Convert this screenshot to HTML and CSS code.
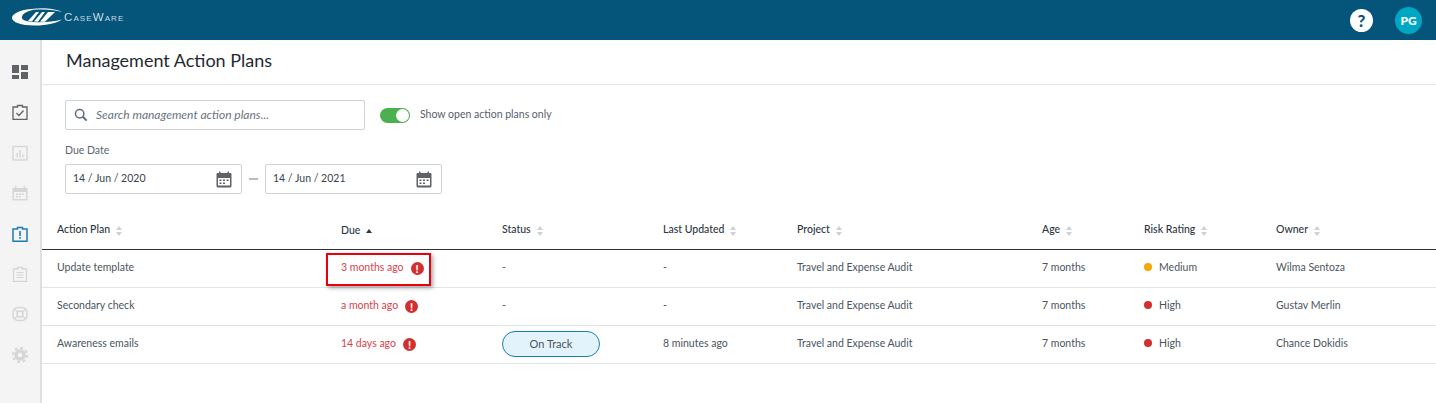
FILE: index.html
```html
<!DOCTYPE html>
<html>
	<head>
		<meta charset="UTF-8">
		<title>Management Action Plans</title>
		<link rel="stylesheet" href="styles.css">
	</head>
	<body>
		<div class="topbar">
			<div class="logo">
				<svg width="52" height="20" viewBox="0 0 52 20">
					<path d="M20 2C8 3 1 7 1 11C1 15 10 18.500 24 18.500C36 18.500 46 16 51 12.500C42 15 32 15.500 22 15C14 14.500 10 12.500 11 9.500C12 6 18 3.500 24 2.600Z" fill="#fff"/>
					<path d="M20 2C30 0.500 44 1 51 5C44 2.800 32 2 24 2.800Z" fill="#e6eef2"/>
					<path d="M17 14L25 5H28L21 14.500ZM23 14.500L31 5H34L27 14.800ZM29 14.800L37 5H44L34 14.800Z" fill="#fff"/>
				</svg>
				<span class="logo-text">CaseWare</span>
			</div>
			<div class="top-right">
				<span class="help">?</span>
				<span class="avatar">PG</span>
			</div>
		</div>
		<div class="main">
			<div class="sidebar">
				<svg class="nav" viewBox="0 0 16 16"><path d="M0 1H7V9H0ZM9 1H16V6H9ZM0 11H7V15H0ZM9 8H16V15H9Z" fill="#5f6266"/></svg>
				<svg class="nav" viewBox="0 0 16 16"><path d="M1 3H5.500V1.500H10.500V3H15V15.500H1Z" fill="none" stroke="#5f6266" stroke-width="1.300"/><path d="M4.500 9L7 11.500L11.500 6.500" fill="none" stroke="#5f6266" stroke-width="1.300"/></svg>
				<svg class="nav" viewBox="0 0 16 16"><path d="M1 1.500H15V15H1Z" fill="none" stroke="#d5d6d7" stroke-width="1.300"/><path d="M4.500 8H6V12.500H4.500ZM7.300 5H8.800V12.500H7.300ZM10.200 9.500H11.700V12.500H10.200Z" fill="#d5d6d7"/></svg>
				<svg class="nav" viewBox="0 0 16 16"><path d="M0.500 3H3V1H4.500V3H11.500V1H13V3H15.500V15.500H0.500Z" fill="#d5d6d7"/><path d="M2 7H14V14H2Z" fill="#f4f4f4"/><path d="M4 8.500H6V10H4ZM7 8.500H9V10H7ZM10 8.500H12V10H10ZM4 11H6V12.500H4ZM7 11H9V12.500H7Z" fill="#d5d6d7"/></svg>
				<svg class="nav" viewBox="0 0 16 16"><path d="M1 3H5.500V1.500H10.500V3H15V15.300H1Z" fill="none" stroke="#1b7db2" stroke-width="1.500"/><path d="M7.200 5H8.800V10H7.200ZM7.200 11H8.800V12.700H7.200Z" fill="#1b7db2"/></svg>
				<svg class="nav" viewBox="0 0 16 16"><path d="M1.500 3H5.500V1.500H10.500V3H14.500V15.300H1.500Z" fill="none" stroke="#d5d6d7" stroke-width="1.300"/><path d="M4.500 6.500H11.500M4.500 9H11.500M4.500 11.500H11.500" stroke="#d5d6d7" stroke-width="1.200"/></svg>
				<svg class="nav" viewBox="0 0 16 16"><rect x="1" y="1.500" width="14" height="13" rx="5" fill="none" stroke="#d5d6d7" stroke-width="1.500"/><circle cx="8" cy="8" r="3" fill="none" stroke="#d5d6d7" stroke-width="1.500"/><path d="M2.500 3.500L5.800 6M13.500 3.500L10.200 6M2.500 12.500L5.800 10M13.500 12.500L10.200 10" stroke="#d5d6d7" stroke-width="1.300"/></svg>
				<svg class="nav" viewBox="0 0 16 16"><circle cx="8" cy="8" r="7" fill="none" stroke="#d5d6d7" stroke-width="2.400" stroke-dasharray="2.700 2.800"/><circle cx="8" cy="8" r="4" fill="none" stroke="#d5d6d7" stroke-width="3.400"/></svg>
			</div>
			<div class="content">
				<h1 class="title">Management Action Plans</h1>
				<div class="filters">
					<div class="filter-row">
						<div class="search">
							<svg width="14" height="14" viewBox="0 0 16 16"><circle cx="6.500" cy="6.500" r="4.800" fill="none" stroke="#5d6d7e" stroke-width="1.700"/><path d="M10 10L14.500 14.500" stroke="#5d6d7e" stroke-width="2.200"/></svg>
							<span class="search-text">Search management action plans...</span>
						</div>
						<span class="toggle"><span class="knob"></span></span>
						<span class="toggle-label">Show open action plans only</span>
					</div>
					<div class="date-label">Due Date</div>
					<div class="date-row">
						<div class="date">
							<span>14 / Jun / 2020</span>
							<svg width="16" height="17" viewBox="0 0 16 17"><path d="M0.500 3Q0.500 2 1.500 2H3V0.500H4.500V2H11.500V0.500H13V2H14.500Q15.500 2 15.500 3V15Q15.500 16.500 14 16.500H2Q0.500 16.500 0.500 15Z" fill="#5f6266"/><path d="M2 7H14V14.500H2Z" fill="#fff"/><path d="M3.500 8.500H5.500V10H3.500ZM7 8.500H9V10H7ZM10.500 8.500H12.500V10H10.500ZM3.500 11.500H5.500V13H3.500ZM7 11.500H9V13H7Z" fill="#5f6266"/></svg>
						</div>
						<span class="dash"></span>
						<div class="date">
							<span>14 / Jun / 2021</span>
							<svg width="16" height="17" viewBox="0 0 16 17"><path d="M0.500 3Q0.500 2 1.500 2H3V0.500H4.500V2H11.500V0.500H13V2H14.500Q15.500 2 15.500 3V15Q15.500 16.500 14 16.500H2Q0.500 16.500 0.500 15Z" fill="#5f6266"/><path d="M2 7H14V14.500H2Z" fill="#fff"/><path d="M3.500 8.500H5.500V10H3.500ZM7 8.500H9V10H7ZM10.500 8.500H12.500V10H10.500ZM3.500 11.500H5.500V13H3.500ZM7 11.500H9V13H7Z" fill="#5f6266"/></svg>
						</div>
					</div>
				</div>
				<table class="plans">
					<colgroup>
						<col class="c1"><col class="c2"><col class="c3"><col class="c4"><col class="c5"><col class="c6"><col class="c7"><col>
					</colgroup>
					<thead>
						<tr>
							<th>Action Plan<span class="sort"></span></th>
							<th>Due<span class="sort-up"></span></th>
							<th>Status<span class="sort"></span></th>
							<th>Last Updated<span class="sort"></span></th>
							<th>Project<span class="sort"></span></th>
							<th>Age<span class="sort"></span></th>
							<th>Risk Rating<span class="sort"></span></th>
							<th>Owner<span class="sort"></span></th>
						</tr>
					</thead>
					<tbody>
						<tr>
							<td>Update template</td>
							<td class="late">3 months ago<span class="alert">!</span><span class="callout"></span></td>
							<td>-</td>
							<td>-</td>
							<td>Travel and Expense Audit</td>
							<td>7 months</td>
							<td><span class="dot medium"></span>Medium</td>
							<td>Wilma Sentoza</td>
						</tr>
						<tr>
							<td>Secondary check</td>
							<td class="late">a month ago<span class="alert">!</span></td>
							<td>-</td>
							<td>-</td>
							<td>Travel and Expense Audit</td>
							<td>7 months</td>
							<td><span class="dot high"></span>High</td>
							<td>Gustav Merlin</td>
						</tr>
						<tr>
							<td>Awareness emails</td>
							<td class="late">14 days ago<span class="alert">!</span></td>
							<td><span class="pill">On Track</span></td>
							<td>8 minutes ago</td>
							<td>Travel and Expense Audit</td>
							<td>7 months</td>
							<td><span class="dot high"></span>High</td>
							<td>Chance Dokidis</td>
						</tr>
					</tbody>
				</table>
			</div>
		</div>
	</body>
</html>
```

FILE: styles.css
```css
*{
	margin: 0;
	padding: 0;
	box-sizing: border-box;
}
html,body{
	height: 100%;
	overflow: hidden;
}
body{
	font-family: Lato, "Liberation Sans", sans-serif;
	font-size: 10.500px;
	color: #4a5560;
	background: #fff;
}
.topbar{
	display: flex;
	align-items: center;
	justify-content: space-between;
	height: 40px;
	padding: 0 14px 0 11px;
	background: #05557b;
}
.logo{
	display: flex;
	align-items: center;
	gap: 1px;
	margin-top: -6px;
}
.logo-text{
	font-family: "Liberation Sans", sans-serif;
	font-variant: small-caps;
	font-size: 11.500px;
	letter-spacing: 1.100px;
	color: #c9dae3;
}
.top-right{
	display: flex;
	align-items: center;
	gap: 22px;
}
.help{
	width: 23px;
	height: 23px;
	border-radius: 50%;
	background: #fff;
	color: #05557b;
	font-size: 17px;
	font-weight: 900;
	line-height: 23px;
	text-align: center;
}
.avatar{
	width: 27px;
	height: 27px;
	border-radius: 50%;
	background: #00a7c4;
	color: #fff;
	font-size: 12px;
	font-weight: 900;
	line-height: 27px;
	text-align: center;
}
.main{
	display: flex;
	height: 363px;
}
.sidebar{
	display: flex;
	flex-direction: column;
	align-items: center;
	gap: 24.400px;
	flex: none;
	width: 42px;
	padding-top: 24px;
	padding-right: 1px;
	background: #f4f4f4;
	border-right: 2px solid #e0e0e0;
}
.nav{
	display: block;
	flex: none;
	width: 16px;
	height: 16px;
}
.content{
	flex: 1;
	min-width: 0;
}
.title{
	height: 45px;
	padding: 9px 0 0 24px;
	font-size: 18px;
	font-weight: 400;
	line-height: 23px;
	color: #1f2a33;
	border-bottom: 1px solid #e3e5e7;
}
.filters{
	padding: 15px 0 0 23px;
}
.filter-row{
	display: flex;
	align-items: center;
}
.search{
	display: flex;
	align-items: center;
	gap: 8px;
	width: 300px;
	height: 30px;
	padding-left: 8px;
	border: 1px solid #ced3da;
	border-radius: 2px;
	font-size: 12px;
	font-style: italic;
	color: #6a7480;
}
.search-text{
	margin-bottom: 1px;
}
.toggle{
	display: flex;
	justify-content: flex-end;
	align-items: center;
	width: 30px;
	height: 15px;
	margin: 0 10px 0 15px;
	padding-right: 1px;
	border-radius: 8px;
	background: #4caf50;
}
.knob{
	width: 13px;
	height: 13px;
	border-radius: 50%;
	background: #fff;
}
.toggle-label{
	margin-bottom: 2px;
	color: #55606c;
}
.date-label{
	margin-top: 13px;
	line-height: 14px;
	color: #5c6773;
}
.date-row{
	display: flex;
	align-items: center;
	margin-top: 7px;
}
.date{
	display: flex;
	align-items: center;
	justify-content: space-between;
	width: 177px;
	height: 30px;
	padding: 0 9px 0 7px;
	border: 1px solid #ced3da;
	border-radius: 2px;
	color: #38424c;
}
.date span{
	margin-bottom: 2px;
}
.dash{
	width: 9px;
	height: 1px;
	margin: 0 7px;
	border-top: 2px solid #b9bdc2;
}
.plans{
	width: 100%;
	margin-top: 16px;
	border-collapse: separate;
	border-spacing: 0;
	table-layout: fixed;
}
.c1{ width: 284px; }
.c2{ width: 161px; }
.c3{ width: 161px; }
.c4{ width: 134px; }
.c5{ width: 245px; }
.c6{ width: 102px; }
.c7{ width: 132px; }
.plans th{
	height: 40px;
	padding: 0 0 0 15px;
	font-weight: 500;
	text-align: left;
	color: #2b3640;
	border-bottom: 1px solid #333;
}
.plans td{
	position: relative;
	height: 38px;
	padding: 0 0 4px 15px;
	border-bottom: 1px solid #e3e4e5;
}
.sort,.sort-up{
	display: inline-block;
	vertical-align: middle;
	margin-left: 6px;
}
.sort{
	position: relative;
	width: 7px;
	height: 10px;
}
.sort:before,.sort:after{
	content: "";
	position: absolute;
	left: 0;
	border-left: 3.500px solid transparent;
	border-right: 3.500px solid transparent;
}
.sort:before{
	top: 0;
	border-bottom: 4px solid #cfd2d5;
}
.sort:after{
	bottom: 0;
	border-top: 4px solid #cfd2d5;
}
.sort-up{
	width: 0;
	height: 0;
	border-left: 3.500px solid transparent;
	border-right: 3.500px solid transparent;
	border-bottom: 4px solid #333;
}
.plans td.late{
	padding-bottom: 2px;
	color: #d9424a;
}
.alert{
	display: inline-block;
	width: 13px;
	height: 13px;
	margin-left: 7px;
	border-radius: 50%;
	background: #d32f2f;
	color: #fff;
	font-size: 11px;
	font-weight: 900;
	line-height: 13px;
	text-align: center;
	vertical-align: -2px;
}
.callout{
	position: absolute;
	top: 3px;
	left: 0;
	width: 105px;
	height: 33px;
	border: 2px solid #e8000d;
	box-shadow: 2px 2px 4px rgba(0,0,0,0.35);
}
.pill{
	display: block;
	width: 98px;
	height: 26px;
	margin-top: 2px;
	border: 1px solid #1b7db2;
	border-radius: 13px;
	background: #e3f3fb;
	font-size: 11px;
	line-height: 23px;
	text-align: center;
	color: #4a5560;
}
.dot{
	display: inline-block;
	width: 8px;
	height: 8px;
	margin-right: 7px;
	border-radius: 50%;
}
.medium{
	background: #f7a600;
}
.high{
	background: #d32f2f;
}
```
